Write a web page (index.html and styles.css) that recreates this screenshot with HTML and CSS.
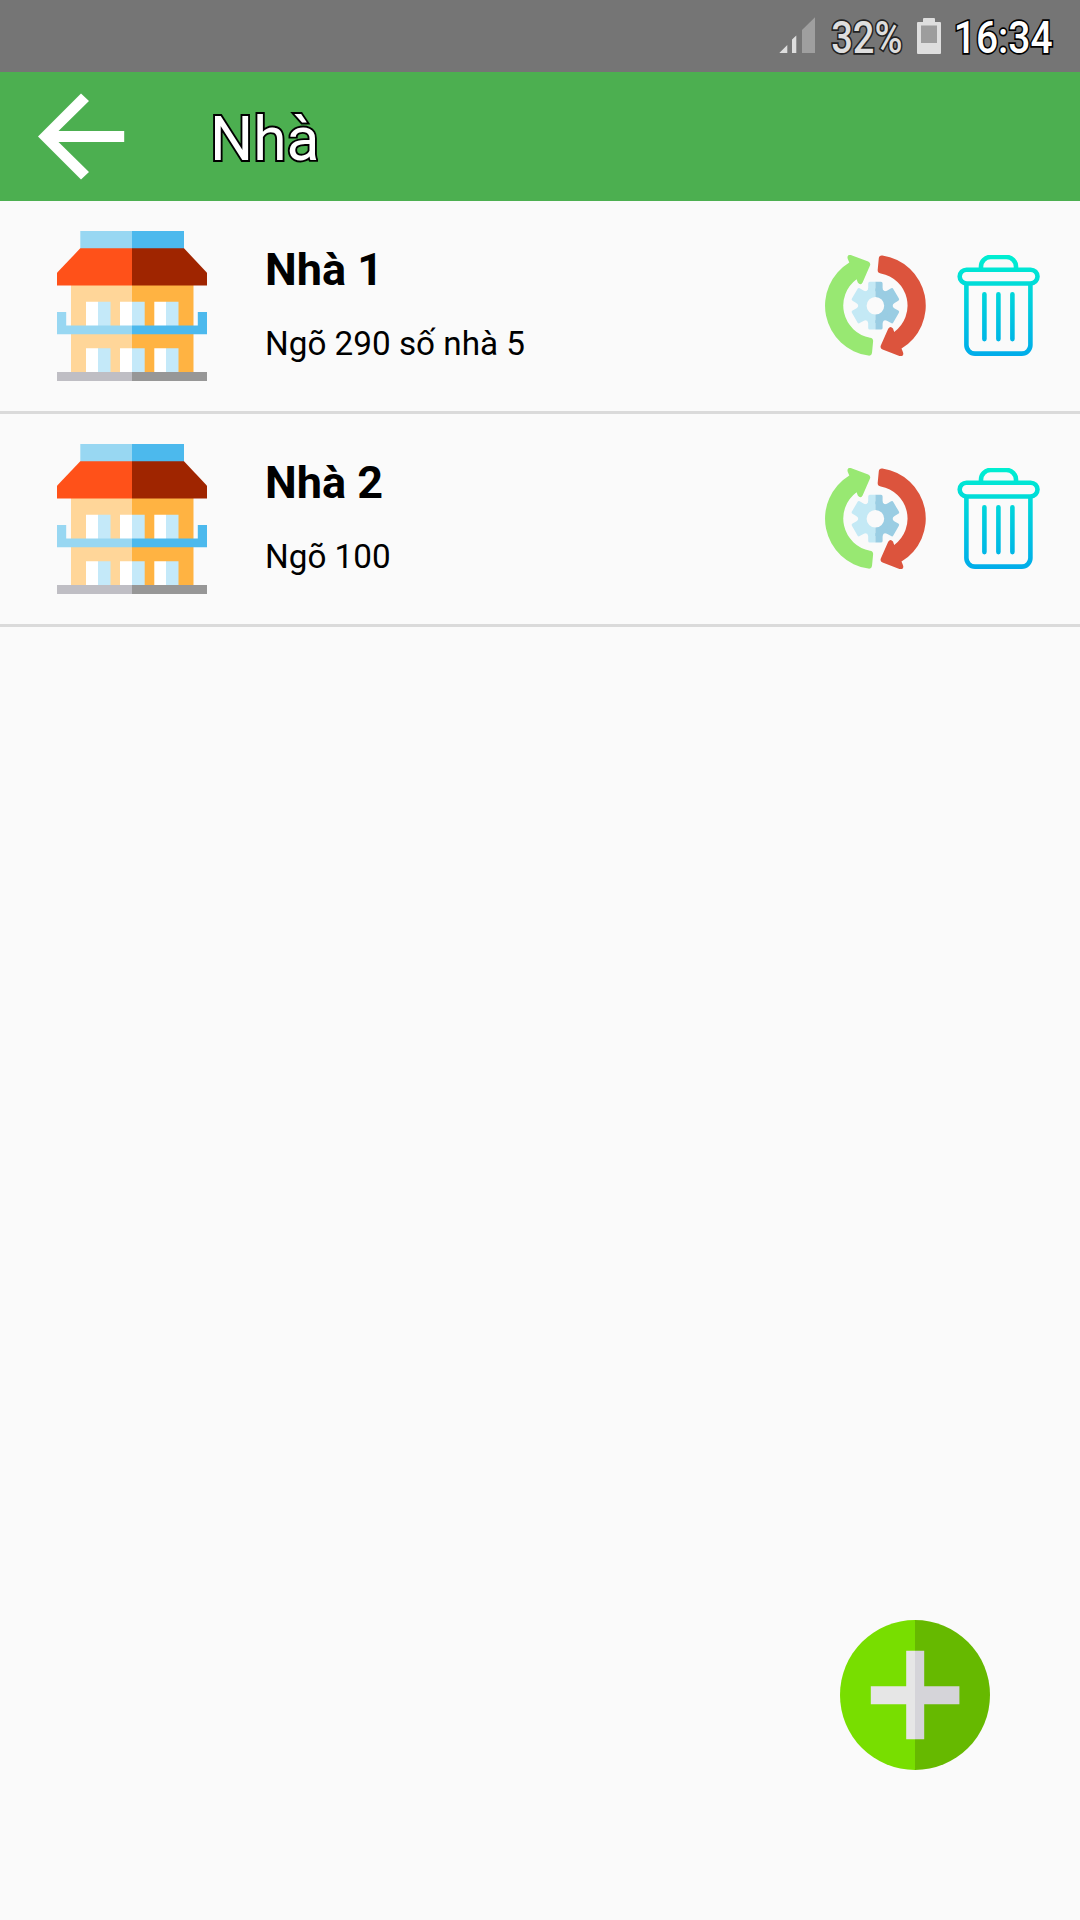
FILE: index.html
```html
<!DOCTYPE html>
<html lang="vi">
<head>
<meta charset="utf-8">
<title>Nhà</title>
<link rel="stylesheet" href="styles.css">
</head>
<body>
<svg class="defs" width="0" height="0" aria-hidden="true">
  <defs>
    <linearGradient id="trash-fill" gradientUnits="userSpaceOnUse" x1="0" y1="0" x2="0" y2="101">
      <stop offset="0" stop-color="#00efd1"/>
      <stop offset="1" stop-color="#00acea"/>
    </linearGradient>
    <clipPath id="gear-left"><rect x="-30" y="-30" width="30" height="60"/></clipPath>
    <clipPath id="gear-right"><rect x="0" y="-30" width="30" height="60"/></clipPath>
    <path id="arc-arrow" d="M45 82.7Q48.4 83 48.1 86.4L47 98Q46.6 101 43.4 100.6A50.4 50.4 0 0 1 24.3 7.6L22.9 4.2C21.6 1.2 23.6-1 26.4 .3L43.2 6.6Q46 7.9 45 10.6L37.6 27.4Q35.4 31 32.8 27.6L31.6 24.2A32.7 32.7 0 0 0 45 82.7Z"/>
    <g id="gear">
      <circle r="13" fill="none" stroke-width="8.4"/>
      <g id="teeth" stroke="none">
        <path id="tooth" d="M-8.6-14.5Q-7.2-16-7.2-18V-22.3Q-7.2-23.9-5.6-23.9H5.6Q7.2-23.9 7.2-22.3V-18Q7.2-16 8.6-14.5Z"/>
        <use href="#tooth" transform="rotate(60)"/>
        <use href="#tooth" transform="rotate(120)"/>
        <use href="#tooth" transform="rotate(180)"/>
        <use href="#tooth" transform="rotate(240)"/>
        <use href="#tooth" transform="rotate(300)"/>
      </g>
    </g>
    <symbol id="icon-update" viewBox="0 0 101 101">
      <use href="#arc-arrow" fill="#98e872"/>
      <use href="#arc-arrow" fill="#dc543d" transform="rotate(180 50.4 50.6)"/>
      <g transform="translate(50.4 50.7)">
        <g clip-path="url(#gear-left)"><use href="#gear" fill="#c4e9f5" stroke="#c4e9f5"/></g>
        <g clip-path="url(#gear-right)"><use href="#gear" fill="#9acde3" stroke="#9acde3"/></g>
      </g>
    </symbol>
    <symbol id="icon-trash" viewBox="0 0 101 101">
      <g fill="none" stroke="url(#trash-fill)" stroke-width="4.6" stroke-linecap="round">
        <path d="M33 14V11.5A9.5 9.5 0 0 1 42.5 2H58.5A9.5 9.5 0 0 1 68 11.5V14"/>
        <rect x="11.7" y="14.7" width="77.8" height="13.8" rx="6.9"/>
        <path d="M18.4 29V90A8.6 8.6 0 0 0 27 98.6H73.8A8.6 8.6 0 0 0 82.4 90V29"/>
        <path d="M36.4 39.3V84.1M50.4 39.3V84.1M64.4 39.3V84.1"/>
      </g>
    </symbol>
    <symbol id="icon-house" viewBox="0 0 150 150">
      <path fill="#98d7f2" d="M23.3 0H75V18H23.3z"/>
      <path fill="#4cb9ed" d="M75 0H127V18H75z"/>
      <path fill="#ffd699" d="M14 54H75V142H14z"/>
      <path fill="#ffb342" d="M75 54H136.5V142H75z"/>
      <path fill="#ff5119" d="M23.3 17.3H75V54.6H0V41.8z"/>
      <path fill="#9f2500" d="M75 17.3H127L150 41.8V54.6H75z"/>
      <path fill="#fff" d="M29 70.7H41V95H29zM63 70.7H75V95H63zM97.3 70.7H109V95H97.3zM29 117.3H41V141H29zM63 117.3H75V141H63zM97.3 117.3H109V141H97.3z"/>
      <path fill="#c4e9f9" d="M41 70.7H53.5V95H41zM75 70.7H87.7V95H75zM109 70.7H121.5V95H109zM41 117.3H53.5V141H41zM75 117.3H87.7V141H75zM109 117.3H121.5V141H109z"/>
      <path fill="#98d7f2" d="M0 81H9.2V94.6H75V103.2H0z"/>
      <path fill="#4cb9ed" d="M150 81H140.8V94.6H75V103.2H150z"/>
      <path fill="#bfbec4" d="M0 141H75V150H0z"/>
      <path fill="#979797" d="M75 141H150V150H75z"/>
    </symbol>
  </defs>
</svg>

<div class="screen">
  <div class="status-bar">
    <svg class="signal" width="37" height="36" viewBox="0 0 37 36">
      <path fill="#dedede" d="M.3 36L8.3 28V36zM13 36V22.5L17.3 18.6V36z"/>
      <path fill="#9f9f9f" d="M23 36V13L36 .2V36z"/>
    </svg>
    <span class="status-text battery-level">32%</span>
    <svg class="battery" width="24" height="36" viewBox="0 0 24 36">
      <path fill="#dedede" d="M6 1Q6 0 7 0H17Q18 0 18 1V4H23Q24 4 24 5V35Q24 36 23 36H1Q0 36 0 35V5Q0 4 1 4H6z"/>
      <path fill="#9d9d9d" d="M4 7.5H20V25H4z"/>
    </svg>
    <span class="status-text clock">16:34</span>
  </div>

  <header class="app-bar">
    <svg class="back" width="87" height="87" viewBox="0 0 87 87"><path fill="#fff" d="M0 43.5L43 .5L51 8L20.5 38.1H86.2V49.1H20.5L51 79L43 86.5z"/></svg>
    <h1 class="app-title">Nhà</h1>
  </header>

  <main class="list">
    <article class="row">
      <svg class="house"><use href="#icon-house"/></svg>
      <div class="info">
        <h2 class="name">Nhà 1</h2>
        <p class="address">Ngõ 290 số nhà 5</p>
      </div>
      <svg class="action"><use href="#icon-update"/></svg>
      <svg class="action"><use href="#icon-trash"/></svg>
    </article>
    <article class="row">
      <svg class="house"><use href="#icon-house"/></svg>
      <div class="info">
        <h2 class="name">Nhà 2</h2>
        <p class="address">Ngõ 100</p>
      </div>
      <svg class="action"><use href="#icon-update"/></svg>
      <svg class="action"><use href="#icon-trash"/></svg>
    </article>
  </main>

  <svg class="fab" viewBox="0 0 150 150">
    <path fill="#78de00" d="M75 0A75 75 0 0 0 75 150z"/>
    <path fill="#66b900" d="M75 0A75 75 0 0 1 75 150z"/>
    <path fill="#e6e6e6" d="M75 30.8H66.2V66.2H30.8V84.2H66.2V119.2H75z"/>
    <path fill="#d5d4d9" d="M75 30.8H84.2V66.2H119.4V84.2H84.2V119.2H75z"/>
  </svg>
</div>
</body>
</html>
```

FILE: styles.css
```css
* {
  box-sizing: border-box;
  margin: 0;
  padding: 0;
}

body {
  font-family: Roboto, "Noto Sans", sans-serif;
  background: #fafafa;
  color: #000;
}

svg {
  display: block;
  flex: none;
}

.defs {
  position: absolute;
}

.screen {
  position: relative;
  width: 1080px;
  height: 1920px;
  overflow: hidden;
  background: #fafafa;
}

.status-bar {
  display: grid;
  grid-template-columns: 37px 101px 24px 112px;
  align-items: center;
  justify-content: end;
  height: 72px;
  padding-right: 27px;
  background: #757575;
}

.battery {
  margin-bottom: 1px;
}

.signal {
  margin-bottom: 3px;
}

.status-text {
  justify-self: end;
  font-size: 44px;
  font-weight: 500;
  line-height: 52px;
  padding-top: 4px;
  color: #fff;
  -webkit-text-stroke: 3.4px #000;
  stroke-linejoin: round;
  paint-order: stroke fill;
  transform: scaleX(0.885);
  transform-origin: right center;
}

.battery-level {
  margin-right: 15px;
  color: #dedede;
  -webkit-text-stroke-color: #222;
  transform: scaleX(0.865);
}

.app-bar {
  display: flex;
  align-items: center;
  gap: 85px;
  height: 129px;
  padding-left: 38px;
  background: #4caf50;
}

.app-title {
  font-size: 60.5px;
  font-weight: 400;
  line-height: 70px;
  padding-top: 7px;
  color: #fff;
  -webkit-text-stroke: 3.8px #000;
  stroke-linejoin: round;
  paint-order: stroke fill;
}

.row {
  display: flex;
  align-items: center;
  height: 213px;
  padding: 0 31px 0 57px;
  border-bottom: 3px solid #dadada;
}

.house {
  width: 150px;
  height: 150px;
}

.info {
  flex: 1;
  padding: 0 0 6px 58px;
}

.name {
  font-size: 45px;
  font-weight: 700;
  line-height: 53px;
  margin-bottom: 28px;
}

.address {
  font-size: 33.25px;
  line-height: 39px;
}

.action {
  width: 101px;
  height: 101px;
  margin-bottom: 1px;
  overflow: visible;
}

.action + .action {
  margin-left: 22px;
}

.fab {
  position: absolute;
  right: 90px;
  bottom: 150px;
  width: 150px;
  height: 150px;
}
```
